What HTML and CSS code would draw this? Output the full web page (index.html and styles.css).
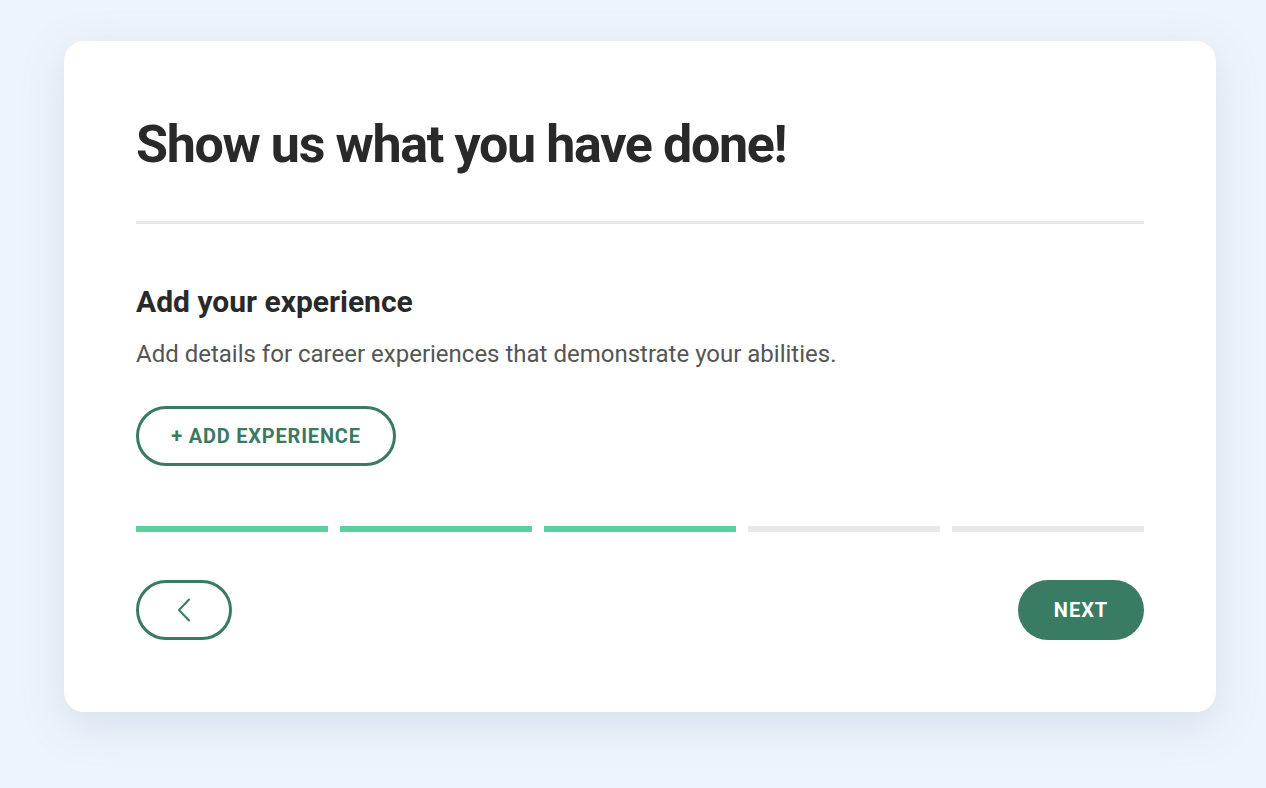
FILE: index.html
```html
<!DOCTYPE html>
<html lang="en">
<head>
<meta charset="utf-8">
<title>Show us what you have done!</title>
<link rel="stylesheet" href="styles.css">
</head>
<body>
<main class="page">
  <section class="card">
    <h1 class="title">Show us what you have done!</h1>
    <hr class="divider">
    <h2 class="subtitle">Add your experience</h2>
    <p class="desc">Add details for career experiences that demonstrate your abilities.</p>
    <button class="btn-outline add-btn" type="button">+ ADD EXPERIENCE</button>
    <div class="progress">
      <span class="seg done"></span>
      <span class="seg done"></span>
      <span class="seg done"></span>
      <span class="seg"></span>
      <span class="seg"></span>
    </div>
    <div class="nav">
      <button class="btn-outline back-btn" type="button" aria-label="Back">
        <svg width="14" height="24" viewBox="0 0 14 24" fill="none" stroke="#3a7a63" stroke-width="2" stroke-linecap="round" stroke-linejoin="round"><path d="M12 1.5 L2 12 L12 22.5"/></svg>
      </button>
      <button class="btn-solid" type="button">NEXT</button>
    </div>
  </section>
</main>
</body>
</html>
```
FILE: styles.css
```css
* { box-sizing: border-box; }
html, body {
  margin: 0;
  padding: 0;
  background: #edf4fb;
  font-family: Roboto, "Liberation Sans", sans-serif;
}
.page {
  padding: 41px 50px 76px 64px;
}
.card {
  width: 1152px;
  height: 671px;
  background: #fff;
  border-radius: 20px;
  box-shadow: 0 12px 40px rgba(150, 175, 205, 0.28);
  padding: 72px;
  display: flex;
  flex-direction: column;
}
.title {
  margin: 0;
  font-size: 52px;
  line-height: 64px;
  font-weight: 700;
  letter-spacing: -1.35px;
  color: #292929;
}
.divider {
  border: 0;
  height: 3px;
  background: #e8e8e8;
  margin: 44px 0 0 0;
}
.subtitle {
  margin: 60px 0 0 0;
  font-size: 30px;
  line-height: 36px;
  font-weight: 700;
  color: #292929;
}
.desc {
  margin: 18px 0 0 0;
  font-size: 24px;
  line-height: 32px;
  color: #555;
}
.btn-outline {
  background: #fff;
  border: 3px solid #3a7a63;
  border-radius: 30px;
  color: #3a7a63;
  font-family: Roboto, "Liberation Sans", sans-serif;
  font-weight: 700;
  cursor: pointer;
}
.add-btn {
  align-self: flex-start;
  margin-top: 36px;
  width: 260px;
  height: 60px;
  padding: 0;
  font-size: 20px;
  letter-spacing: 0.8px;
}
.progress {
  margin-top: 60px;
  display: flex;
  gap: 12px;
}
.seg {
  flex: 1;
  height: 6px;
  background: #e8e8e8;
}
.seg.done { background: #5ccf9f; }
.nav {
  margin-top: 48px;
  display: flex;
  justify-content: space-between;
}
.back-btn {
  width: 96px;
  height: 60px;
  display: flex;
  align-items: center;
  justify-content: center;
  padding: 0;
}
.btn-solid {
  width: 126px;
  height: 60px;
  border: 0;
  border-radius: 30px;
  background: #397b63;
  color: #fff;
  font-family: Roboto, "Liberation Sans", sans-serif;
  font-weight: 700;
  font-size: 20px;
  letter-spacing: 1px;
  padding: 0;
  cursor: pointer;
}
```
